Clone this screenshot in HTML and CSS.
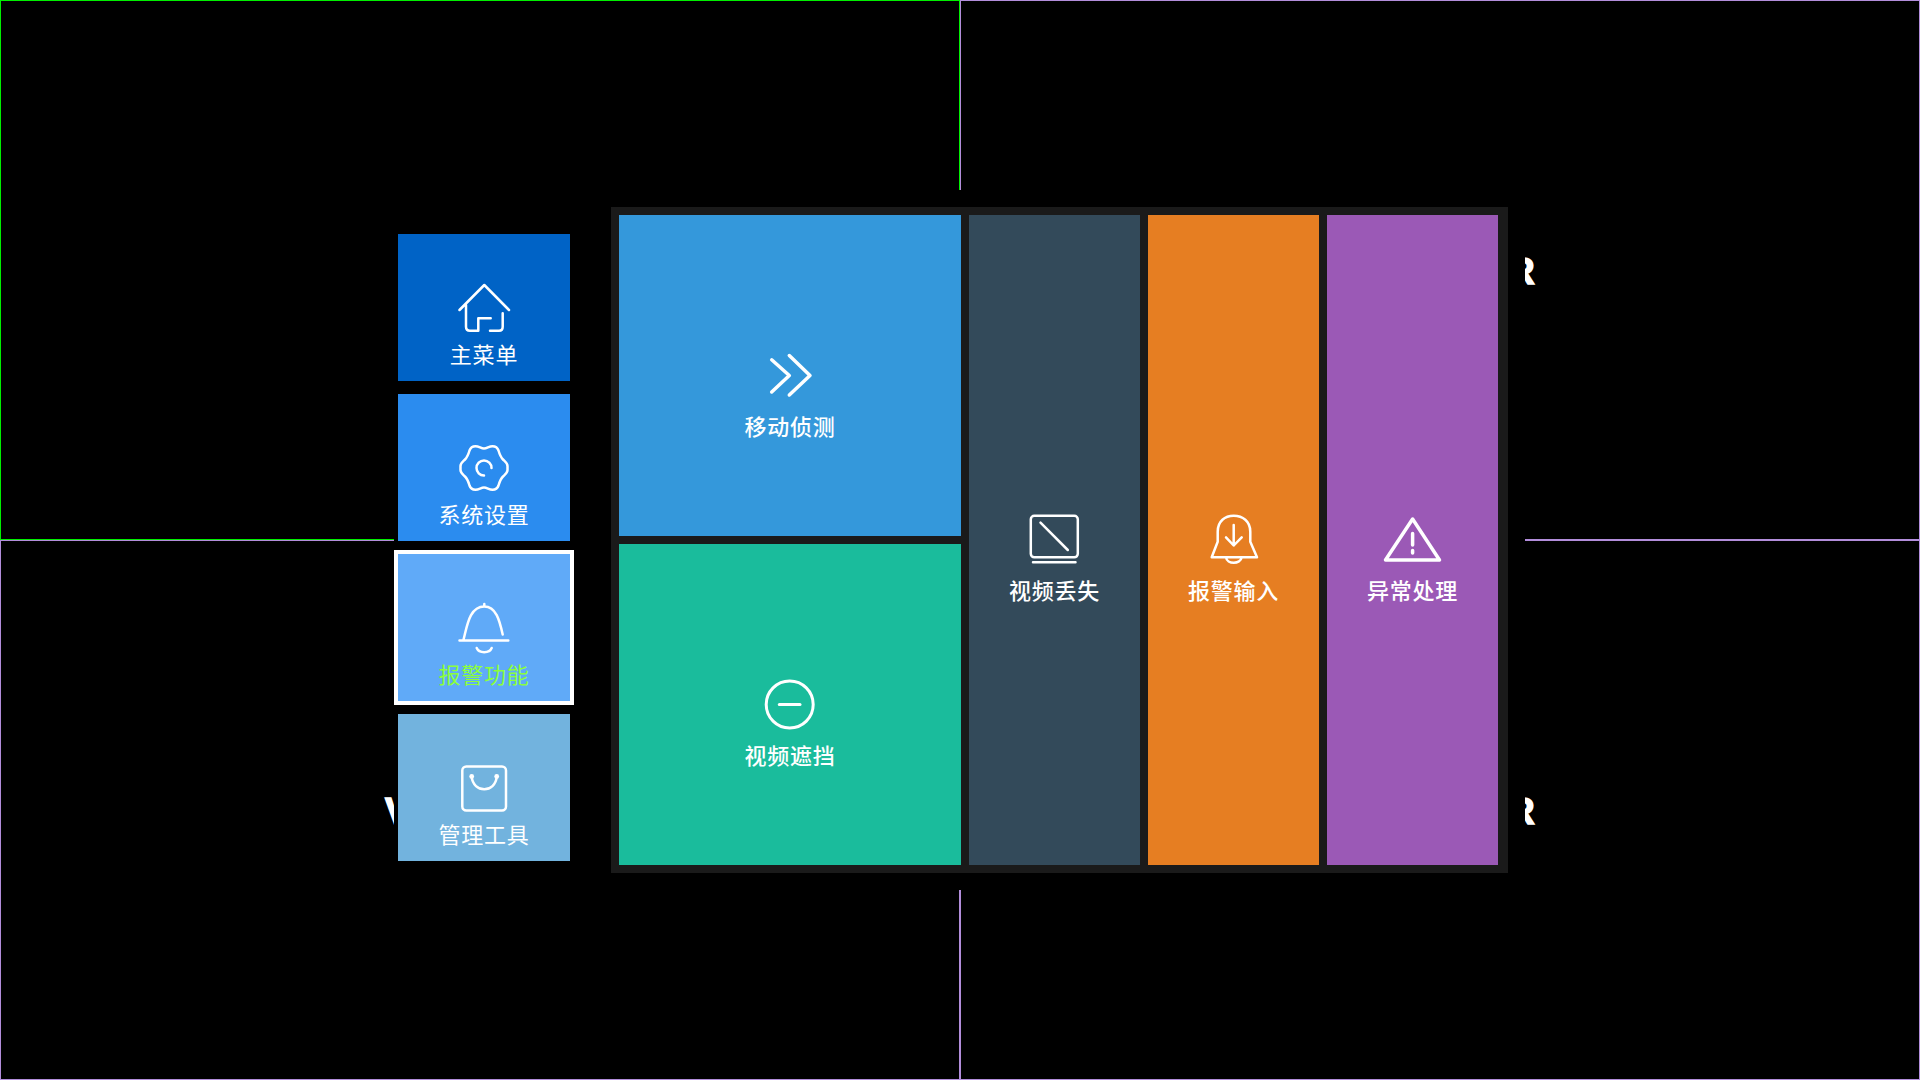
FILE: index.html
```html
<!DOCTYPE html>
<html lang="zh-CN">
<head>
  <meta charset="UTF-8">
  <title>报警功能</title>
  <link rel="stylesheet" href="styles.css">
</head>
<body>
  <!-- four video channels behind the menu -->
  <div class="channels">
    <div class="channel active"></div>
    <div class="channel"><span class="osd osd-top-right">R</span></div>
    <div class="channel"><span class="osd osd-bottom-left">V</span></div>
    <div class="channel"><span class="osd osd-bottom-right">R</span></div>
  </div>

  <div class="overlay">
    <div class="menu">
      <div class="menu-item home">
        <svg class="icon" viewBox="0 0 50 50"><path d="M.5 27L25.3 2L50 27M7 22V43.7Q7 47.7 11 47.7H19.3V35.3H31.7M43.7 30.3V43.7Q43.7 47.7 40 47.7H31"/></svg>
        <div class="label">主菜单</div>
      </div>
      <div class="menu-item settings">
        <svg class="icon" viewBox="0 0 50 50"><path d="M25 5.5C28 5.5 30 3.2 33.5 3.2C36.500 3.2 38.500 4.500 39.500 7.500C40.500 11 41.500 14 44 16.500C46 18.500 48.500 20 48.500 23V27C48.500 30 46 31.500 44 33.500C41.500 36 40.500 39 39.500 42.500C38.500 45.500 36.500 46.800 33.500 46.800C30 46.800 28 44.500 25 44.500C22 44.500 20 46.800 16.500 46.800C13.500 46.800 11.500 45.500 10.500 42.500C9.500 39 8.500 36 6 33.500C4 31.500 1.500 30 1.500 27V23C1.500 20 4 18.500 6 16.500C8.500 14 9.500 11 10.500 7.500C11.500 4.500 13.500 3.200 16.500 3.200C20 3.200 22 5.500 25 5.500Z"/><path d="M32.5 25A7.5 7.5 0 1 0 25 32.5"/></svg>
        <div class="label">系统设置</div>
      </div>
      <div class="menu-item alarm selected">
        <svg class="icon" viewBox="0 0 50 50"><path d="M25.3 1V3.5M4.3 37.5C8 24 10 3.5 25.3 3.5C37 3.5 40.5 17 43.7 31.5M.5 37.5H49.3M17.7 45C20 50.5 30.5 50.5 32.7 45"/></svg>
        <div class="label">报警功能</div>
      </div>
      <div class="menu-item tools">
        <svg class="icon" viewBox="0 0 50 50"><rect x="3.3" y="3.5" width="43.7" height="44" rx="4"/><path d="M12.7 13.5C14 30.5 36.5 30.5 37.7 13.5"/><circle class="dot" cx="12.7" cy="13.5" r="2.4"/><circle class="dot" cx="37.7" cy="13.5" r="2.4"/></svg>
        <div class="label">管理工具</div>
      </div>
    </div>

    <div class="panel">
      <div class="tile motion">
        <svg class="icon chevrons" viewBox="0 0 50 50"><path d="M6.7 8.8L24.3 24.5L6.7 41M24.3 4.5L45 24.5L24.3 44"/></svg>
        <div class="label">移动侦测</div>
      </div>
      <div class="tile loss">
        <svg class="icon" viewBox="0 0 50 50"><rect x=".8" y=".8" width="47" height="41.5" rx="3.5"/><path d="M10.5 7.7L37.8 35M3 47.3H45.5"/></svg>
        <div class="label">视频丢失</div>
      </div>
      <div class="tile input">
        <svg class="icon" viewBox="0 0 50 50"><path d="M8.7 26.7V16.7C8.7 6 16 .8 24.7 .8C33.5 .8 41.3 6 41.3 16.7V26.7L48 42.3H2.7ZM17 42.3C18 49.5 31.5 49.5 32.7 42.3M24.7 10V30M17 22.3L24.7 30.5L32.7 22.3"/></svg>
        <div class="label">报警输入</div>
      </div>
      <div class="tile abnormal">
        <svg class="icon wide" viewBox="0 0 50 50"><path d="M24.6 4L51.5 45H-2.5ZM24.6 18.5V30M24.6 35.5V38"/></svg>
        <div class="label">异常处理</div>
      </div>
      <div class="tile mask">
        <svg class="icon heavy" viewBox="0 0 50 50"><circle cx="24.7" cy="24.5" r="23.5"/><path d="M14.3 24.5H35"/></svg>
        <div class="label">视频遮挡</div>
      </div>
    </div>
  </div>
</body>
</html>
```

FILE: styles.css
```css
html, body { margin: 0; padding: 0; height: 100%; background: #000; overflow: hidden; }
body { font-family: "Noto Sans CJK SC", "Liberation Sans", sans-serif; color: #fff; position: relative; }

.channels { display: grid; grid-template-columns: 960px 960px; grid-template-rows: 540px 540px; }
.channel { border: 1px solid #b28ddb; box-sizing: border-box; position: relative; }
.channel.active { border-color: #00ee00; }

.osd { position: absolute; font-family: "Liberation Sans", sans-serif; font-weight: bold; font-size: 37px; line-height: 37px; color: #fff; -webkit-text-stroke: 1.5px #fff; }
.osd-top-right { left: 547px; top: 252px; }
.osd-bottom-left { left: 384px; top: 252px; }
.osd-bottom-right { left: 547px; top: 252px; }

.overlay {
  position: absolute; left: 394px; top: 190px; width: 1131px; height: 700px;
  background: #000; display: flex; align-items: flex-start;
}

.menu { display: flex; flex-direction: column; gap: 5px; margin-top: 40px; margin-right: 37px; }
.menu-item {
  width: 172px; height: 147px; border: 4px solid transparent; background-clip: padding-box;
  display: grid; grid-template-rows: 1fr 50px 1fr; justify-items: center;
}
.menu-item.selected { border-color: #fff; }
.menu-item.selected .label { color: #8cff3c; }
.home { background-color: #0063c6; }
.settings { background-color: #2b8cef; }
.alarm { background-color: #60aaf8; }
.tools { background-color: #72b3de; }

.panel {
  margin-top: 17px; padding: 8px 10px 8px 8px; background: #1a1a1a;
  display: grid; grid-template-columns: 342px 171px 171px 171px; grid-template-rows: 321px 321px; gap: 8px;
}
.tile { display: grid; grid-template-rows: 1fr 50px 1fr; justify-items: center; }
.motion { background: #3498db; }
.mask { background: #1abc9c; }
.loss { background: #334a5a; grid-column: 2; grid-row: 1 / 3; }
.input { background: #e67e22; grid-column: 3; grid-row: 1 / 3; }
.abnormal { background: #9b59b6; grid-column: 4; grid-row: 1 / 3; }

.icon { grid-row: 2; width: 50px; height: 50px; overflow: visible; fill: none; stroke: #fff; stroke-width: 2.5; stroke-linecap: round; stroke-linejoin: round; }
.icon .dot { fill: #fff; stroke: none; }
.icon.heavy { stroke-width: 3; }
.icon.chevrons { stroke-width: 3.5; }
.icon.wide { stroke-width: 3.5; }

.label { grid-row: 3; align-self: start; margin-top: 8px; font-size: 22px; line-height: 24px; font-weight: 400; letter-spacing: .8px; white-space: nowrap; }
.tile .label { margin-top: 12px; font-weight: 500; }
```
